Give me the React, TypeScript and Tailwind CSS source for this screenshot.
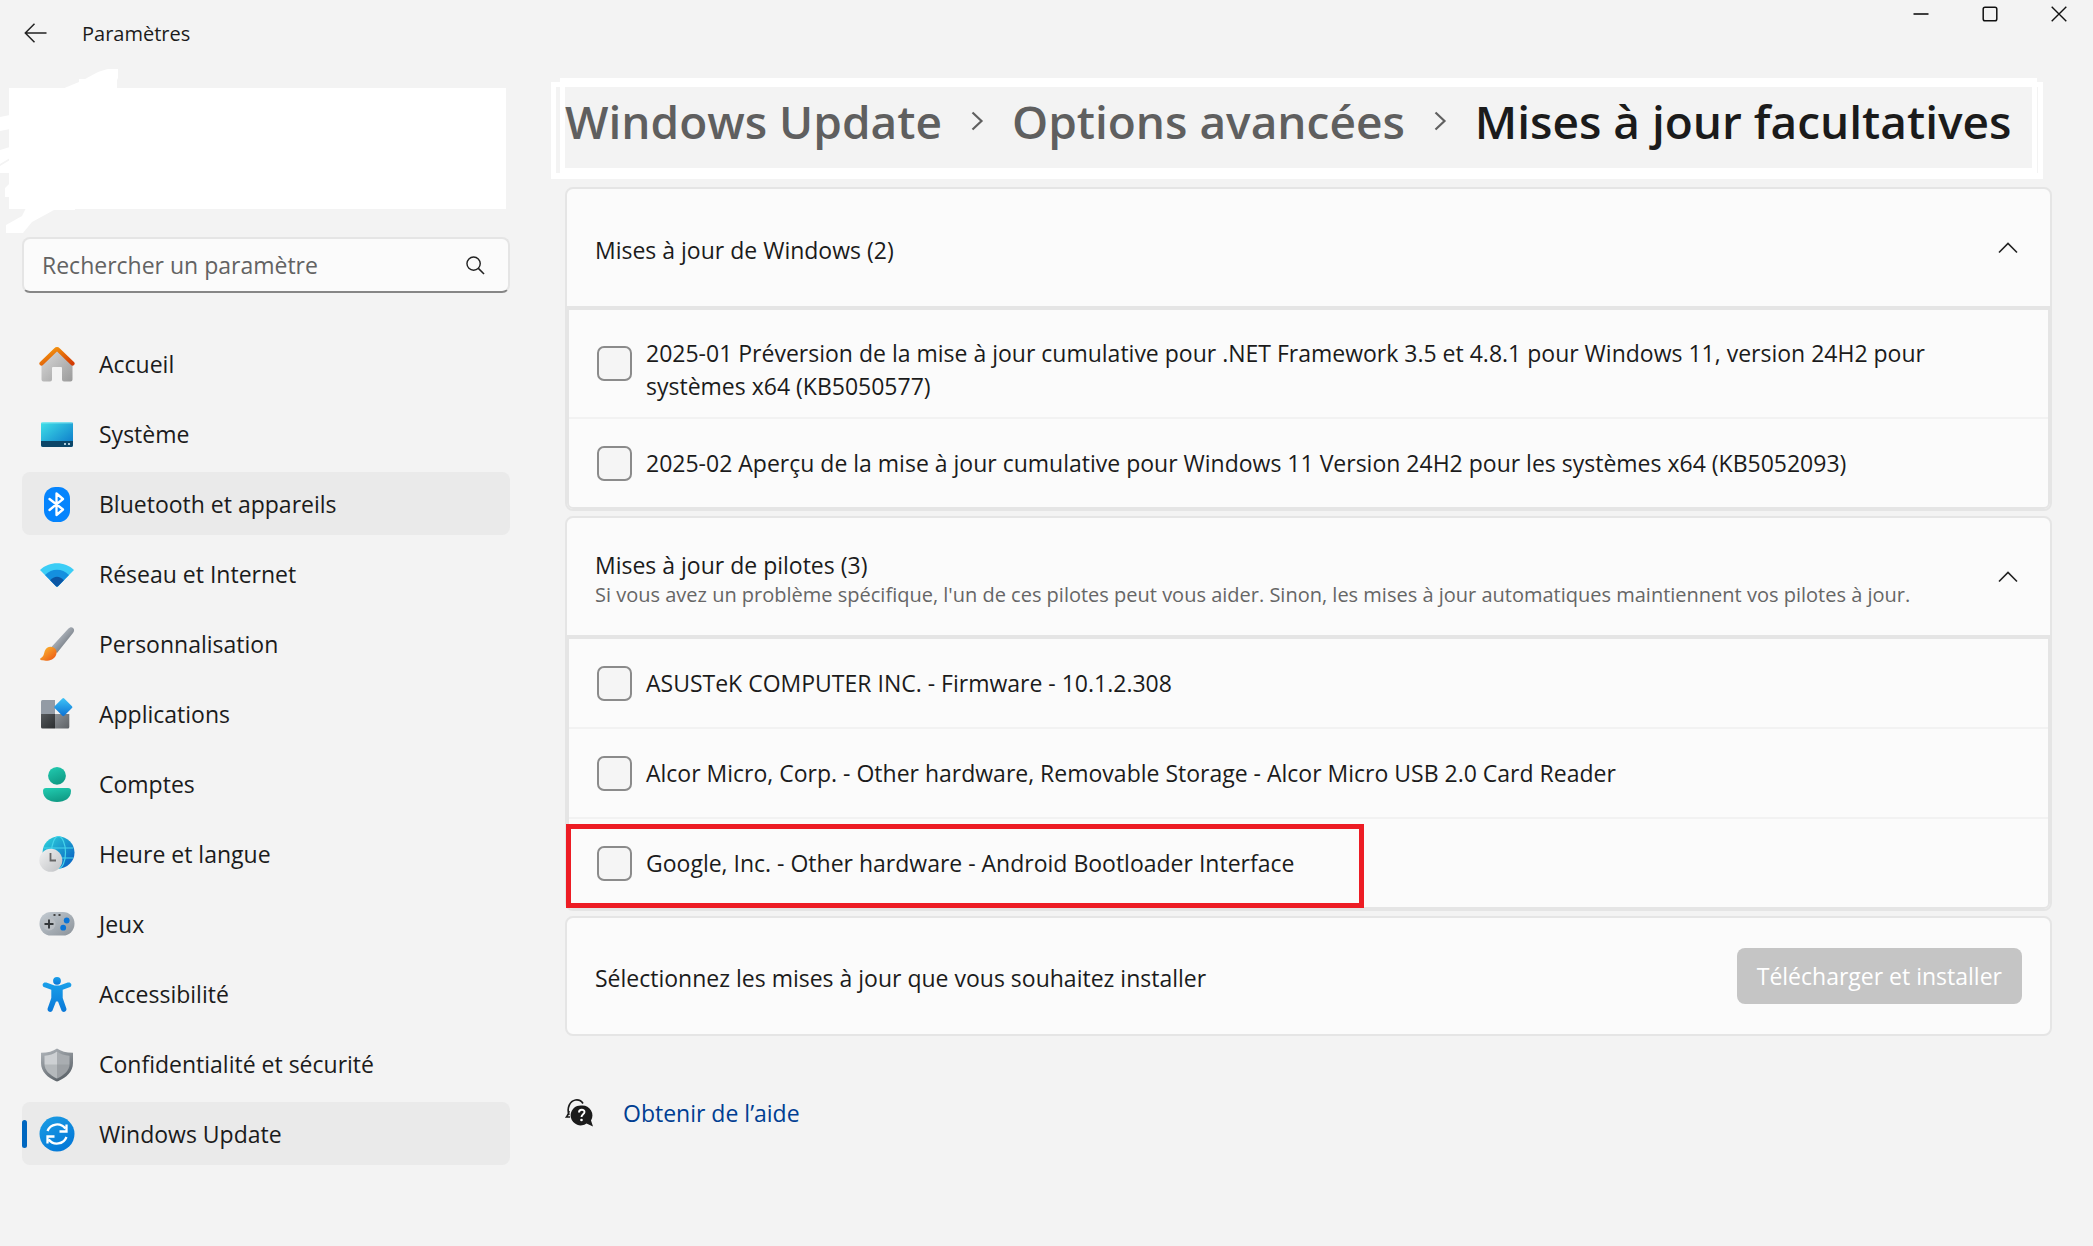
import React from "react";

const svgProps = { viewBox: "0 0 36 36", className: "h-9 w-9 shrink-0", "aria-hidden": true } as const;

const HomeIcon = () => (
  <svg {...svgProps}>
    <defs>
      <linearGradient id="homeWall" x1="0" y1="0" x2="1" y2="1"><stop stopColor="#dcdcdc" /><stop offset="1" stopColor="#9a9a9a" /></linearGradient>
      <linearGradient id="homeRoof" x1="0" y1="0" x2="1" y2="1"><stop stopColor="#f8a010" /><stop offset="1" stopColor="#d23a04" /></linearGradient>
    </defs>
    <path d="M2.5 16 18 3 33.500 16V33.500a2 2 0 0 1-2 2H25a2 2 0 0 1-2-2V22a1 1 0 0 0-1-1H14a1 1 0 0 0-1 1V33.500a2 2 0 0 1-2 2H4.500a2 2 0 0 1-2-2Z" fill="url(#homeWall)" />
    <path d="M2.500 17.500 16.500 4a2.200 2.200 0 0 1 3 0L33.500 17.500" fill="none" stroke="url(#homeRoof)" strokeWidth="4.200" strokeLinecap="round" strokeLinejoin="round" />
  </svg>
);

const SystemIcon = () => (
  <svg {...svgProps}>
    <defs><linearGradient id="sysScreen" x1="0" y1="0" x2="1" y2="1"><stop stopColor="#3fe0e8" /><stop offset="1" stopColor="#0a74c8" /></linearGradient></defs>
    <rect x="2" y="6" width="32" height="25" rx="2" fill="url(#sysScreen)" />
    <path d="M2 25h32v4a2 2 0 0 1-2 2H4a2 2 0 0 1-2-2Z" fill="#0c4668" />
    <path d="M3 6.800h30" stroke="#9deef5" strokeWidth="1" />
    <rect x="25" y="27" width="2" height="2" fill="#a9c9d8" /><rect x="29" y="27" width="2" height="2" fill="#a9c9d8" />
  </svg>
);

const BluetoothIcon = () => (
  <svg {...svgProps}>
    <rect x="5" y="1" width="26" height="35" rx="11.500" fill="#0584fd" />
    <path d="m10.500 13 13.500 10.500-6.500 5.500V7.500l6.500 5.500L10.500 24" fill="none" stroke="#fff" strokeWidth="2.300" strokeLinejoin="round" strokeLinecap="round" />
  </svg>
);

const NetworkIcon = () => (
  <svg {...svgProps}>
    <path d="M1 14C10 5 26 5 35 14L19 30.300a1.500 1.500 0 0 1-2 0Z" fill="#3bcdf6" />
    <path d="M6 19C13 12 23 12 30 19L19 30.300a1.500 1.500 0 0 1-2 0Z" fill="#1490df" />
    <path d="M11.200 24.200C15 19.500 21 19.500 24.800 24.200L19 30.300a1.500 1.500 0 0 1-2 0Z" fill="#0b56a4" />
  </svg>
);

const BrushIcon = () => (
  <svg {...svgProps}>
    <defs>
      <linearGradient id="brushStem" x1="0" y1="0" x2="1" y2="1"><stop offset=".3" stopColor="#b4bac2" /><stop offset=".75" stopColor="#70777f" /></linearGradient>
      <linearGradient id="brushTip" x1="0" y1="0" x2="1" y2="1"><stop stopColor="#fdc233" /><stop offset="1" stopColor="#ea4f12" /></linearGradient>
    </defs>
    <path d="M11.500 22 29 3C31 .8 33 .8 34.300 2.200 35.500 3.500 35.300 5.500 34 7L18 27Z" fill="url(#brushStem)" />
    <path d="M6 24.500C7.500 20 13.500 19.500 16.500 23c2.500 3.500.5 8.500-3.500 10.500-3.500 1.600-8.500 1.500-11.500.3C.5 33 1 32.500 2 32c3-1.500 2.800-4.500 4-7.500Z" fill="url(#brushTip)" />
  </svg>
);

const AppsIcon = () => (
  <svg {...svgProps}>
    <defs>
      <linearGradient id="appBlue" x1="0" y1="0" x2="1" y2="1"><stop stopColor="#3fc6f8" /><stop offset="1" stopColor="#0b6ed2" /></linearGradient>
      <linearGradient id="appDark" x1="0" y1="0" x2="1" y2="1"><stop stopColor="#55595c" /><stop offset="1" stopColor="#2b2e30" /></linearGradient>
      <linearGradient id="appGrey" x1="0" y1="0" x2="1" y2="1"><stop stopColor="#8c9196" /><stop offset="1" stopColor="#5d6165" /></linearGradient>
    </defs>
    <path d="M3.500 4H16v14H2V5.500A1.500 1.500 0 0 1 3.500 4Z" fill="#939ba5" />
    <path d="M2 18h14v14.500H3.500A1.500 1.500 0 0 1 2 31Z" fill="url(#appDark)" />
    <path d="M16 18h14.300v13a1.500 1.500 0 0 1-1.500 1.500H16Z" fill="url(#appGrey)" />
    <rect x="17.500" y="4.300" width="13.600" height="13.600" rx="1.300" fill="url(#appBlue)" transform="rotate(45 24.300 11.100)" />
  </svg>
);

const AccountIcon = () => (
  <svg {...svgProps}>
    <defs><linearGradient id="acct" x1="0" y1="0" x2=".4" y2="1"><stop stopColor="#22cdb2" /><stop offset="1" stopColor="#109c86" /></linearGradient></defs>
    <circle cx="18" cy="9.800" r="8.900" fill="url(#acct)" />
    <path d="M7 22h22a3 3 0 0 1 3 3c0 7-6 11-14 11S4 32 4 25a3 3 0 0 1 3-3Z" fill="url(#acct)" />
  </svg>
);

const TimeIcon = () => (
  <svg {...svgProps}>
    <defs>
      <linearGradient id="globe" x1="0" y1="0" x2="1" y2="1"><stop offset=".1" stopColor="#2bcbd9" /><stop offset=".8" stopColor="#0d6fc6" /></linearGradient>
      <linearGradient id="clock" x1="0" y1="0" x2="1" y2="1"><stop stopColor="#f2f2f2" /><stop offset="1" stopColor="#bfc1c4" /></linearGradient>
    </defs>
    <circle cx="19.500" cy="16.500" r="16" fill="url(#globe)" />
    <g fill="none" stroke="#46d4ea" strokeWidth="1.200"><path d="M5 12h29M5 22h29" /><ellipse cx="19.500" cy="16.500" rx="7" ry="16" /></g>
    <circle cx="11.800" cy="24.300" r="11.500" fill="url(#clock)" />
    <path d="M11.500 17v7.500H17" fill="none" stroke="#666" strokeWidth="1.800" />
  </svg>
);

const GameIcon = () => (
  <svg {...svgProps}>
    <defs><linearGradient id="pad" x1="0" y1="0" x2="1" y2="1"><stop stopColor="#c4ccd3" /><stop offset="1" stopColor="#8c939a" /></linearGradient></defs>
    <rect x=".5" y="6" width="35" height="23.500" rx="11.500" fill="url(#pad)" />
    <circle cx="10" cy="18" r="6.500" fill="#b9bec3" />
    <path d="M10 13.500v9M5.500 18h9" stroke="#33373a" strokeWidth="1.900" />
    <rect x="14.500" y="8" width="2" height="2" fill="#444" /><rect x="19.500" y="8" width="2" height="2" fill="#444" />
    <circle cx="27.700" cy="14.500" r="2.900" fill="#0a74d6" /><circle cx="24.200" cy="21.700" r="2.900" fill="#0a74d6" />
  </svg>
);

const AccessIcon = () => (
  <svg {...svgProps}>
    <defs><linearGradient id="access" x1="0" y1="0" x2="0" y2="1"><stop stopColor="#1aa0ea" /><stop offset="1" stopColor="#0a78d8" /></linearGradient></defs>
    <g fill="url(#access)"><circle cx="18" cy="4.800" r="3.900" />
      <path d="M7.300 6.600 15.500 9.500H20.500L28.700 6.600C30.300 6 31.700 6.700 32.200 8c.5 1.500-.3 2.800-1.700 3.300L23.700 13.800V22L27.300 32.300c.5 1.500-.2 3-1.500 3.500-1.500.5-2.900-.2-3.400-1.500L19 25.500h-2L13.600 34.300c-.5 1.300-1.900 2-3.400 1.500-1.300-.5-2-2-1.500-3.500L12.300 22V13.800L5.500 11.300C4.100 10.800 3.300 9.500 3.800 8c.5-1.300 1.900-2 3.500-1.400Z" />
    </g>
  </svg>
);

const ShieldIcon = () => (
  <svg {...svgProps}>
    <defs><linearGradient id="shield" x1="0" y1="0" x2=".5" y2="1"><stop stopColor="#b3b8bd" /><stop offset="1" stopColor="#5f666c" /></linearGradient></defs>
    <path d="M18 2.500c4 2.800 9 4.200 16 4.200V17c0 9-7 14.500-14.500 18-1 .5-2 .5-3 0C9 31.500 2 26 2 17V6.700c7 0 12-1.400 16-4.200Z" fill="url(#shield)" />
    <path d="M18 5.500C14.500 8 10.500 9.300 5.500 9.700V18c0 6.500 5.500 11 12.500 14.500Z" fill="#cdd0d3" />
    <path d="M18 5.500c3.500 2.500 7.500 3.800 12.500 4.200V18c0 6.500-5.500 11-12.500 14.500Z" fill="#a9adb1" />
    <path d="M5.500 18.500H18v14C11 29 5.500 25 5.500 18.500ZM18 18.500h12.500C30.500 25 25 29 18 32.500Z" fill="#7d8388" opacity=".3" />
  </svg>
);

const UpdateIcon = () => (
  <svg {...svgProps}>
    <defs><linearGradient id="upd" x1="0" y1="0" x2=".6" y2="1"><stop stopColor="#1c9ee4" /><stop offset="1" stopColor="#0479d8" /></linearGradient></defs>
    <circle cx="18" cy="18" r="17.500" fill="url(#upd)" />
    <g fill="none" stroke="#fff" strokeWidth="2.300"><path d="M8.500 15a10.300 10.300 0 0 1 17.800-2.500M27.500 8.500v7h-7M27.500 21A10.300 10.300 0 0 1 9.700 23.500M8.500 27.500v-7h7" /></g>
  </svg>
);

const NAV = [
  { label: "Accueil", Icon: HomeIcon },
  { label: "Système", Icon: SystemIcon },
  { label: "Bluetooth et appareils", Icon: BluetoothIcon, hover: true },
  { label: "Réseau et Internet", Icon: NetworkIcon },
  { label: "Personnalisation", Icon: BrushIcon },
  { label: "Applications", Icon: AppsIcon },
  { label: "Comptes", Icon: AccountIcon },
  { label: "Heure et langue", Icon: TimeIcon },
  { label: "Jeux", Icon: GameIcon },
  { label: "Accessibilité", Icon: AccessIcon },
  { label: "Confidentialité et sécurité", Icon: ShieldIcon },
  { label: "Windows Update", Icon: UpdateIcon, current: true },
];

const Chevron = () => (
  <svg viewBox="0 0 20 12" className="h-3 w-5 shrink-0" aria-hidden><path d="m1 10.500 9-9 9 9" fill="none" stroke="#222" strokeWidth="1.600" /></svg>
);

const Crumb = () => (
  <svg viewBox="0 0 14 20" className="h-5 w-3.5 shrink-0" aria-hidden><path d="m2.500 1.500 9 8.500-9 8.500" fill="none" stroke="#606060" strokeWidth="2.200" /></svg>
);

type Update = { text: string; tall?: boolean; marked?: boolean };

function Group({ title, note, items }: { title: string; note?: string; items: Update[] }) {
  return (
    <section className="rounded-lg border-2 border-[#e5e5e5] bg-[#fbfbfb]">
      <button type="button" aria-expanded className="flex h-[117px] w-full items-center justify-between pr-8 pl-7 text-left">
        <span className="pt-1">
          <span className="block leading-8">{title}</span>
          {note && <span className="block text-[20px] leading-7 text-[#666]">{note}</span>}
        </span>
        <Chevron />
      </button>
      <ul className="rounded-b-md border-2 border-t-4 border-[#e5e5e5]">
        {items.map(({ text, tall, marked }, i) => (
          <li key={text} className={i ? "relative border-t-2 border-[#f2f2f2]" : "relative"}>
            <label className={`flex items-center gap-3.5 py-3 pr-24 pl-7 ${tall ? "min-h-[107px]" : "min-h-[88px]"}`}>
              <input type="checkbox" className="h-[35px] w-[35px] shrink-0 appearance-none rounded-[7px] border-2 border-[#8b8b8b] bg-[#f5f5f5] checked:bg-[#005fb8]" />
              <span className={`leading-[33px] ${tall ? "pt-3" : ""}`}>{text}</span>
            </label>
            {marked && <span className="pointer-events-none absolute top-[5px] -bottom-px -left-[3px] w-[798px] border-5 border-[#ed1c24]" />}
          </li>
        ))}
      </ul>
    </section>
  );
}

export default function App() {
  return (
    <div className="min-h-screen bg-[#f3f3f3] font-['Open_Sans','Noto_Sans',sans-serif] text-[23px] text-[#1b1b1b]">
      <header className="flex h-[66px] items-start justify-between">
        <div className="flex h-full items-center gap-[34px] pl-6">
          <button type="button" aria-label="Retour">
            <svg viewBox="0 0 24 20" className="h-5 w-6" aria-hidden><path d="M22.500 10H1M10.500.8 1.300 10l9.200 9.200" fill="none" stroke="#222" strokeWidth="1.500" /></svg>
          </button>
          <span className="pt-0.5 text-[20px]">Paramètres</span>
        </div>
        <div className="flex">
          <button type="button" aria-label="Réduire" className="flex h-[27px] w-[69px] items-center justify-center"><svg viewBox="0 0 16 16" className="h-4 w-4"><path d="M.5 8h15" stroke="#111" strokeWidth="1.600" /></svg></button>
          <button type="button" aria-label="Agrandir" className="flex h-[27px] w-[69px] items-center justify-center"><svg viewBox="0 0 16 16" className="h-4 w-4"><rect x="1.200" y="1.200" width="13.600" height="13.600" rx="1.800" fill="none" stroke="#111" strokeWidth="1.500" /></svg></button>
          <button type="button" aria-label="Fermer" className="flex h-[27px] w-[69px] items-center justify-center"><svg viewBox="0 0 16 16" className="h-4 w-4"><path d="m.7.7 14.600 14.600M15.300.7.7 15.300" stroke="#111" strokeWidth="1.400" /></svg></button>
        </div>
      </header>

      <div className="flex">
        <aside className="w-[510px] shrink-0">
          <div className="relative pt-[22px] pr-1 pl-[9px]">
            <div className="h-[121px] bg-white" />
            <svg viewBox="0 0 120 180" className="absolute -top-1.5 left-0 h-[180px] w-[120px]" fill="#fff" aria-hidden>
              <path d="M62 29 79 22V19H85L98 12 106 9.500 108 9H118V18L117 20V29Z" />
              <path d="M0 57 10 55V69L0 71ZM0 90 10 87V98L0 104ZM0 106 10 100V113H0ZM5 128 10 123V137H5Z" />
              <path d="M26 148H75V150H54L32 162 23 173H6V165L22 156Z" />
            </svg>
          </div>
          <label className="mt-7 ml-[22px] flex h-[56px] items-center justify-between rounded-lg border-2 border-[#e5e5e5] border-b-[#868686] bg-[#fbfbfb] pr-[23px] pl-[18px]">
            <input type="text" aria-label="Rechercher un paramètre" placeholder="Rechercher un paramètre" className="min-w-0 flex-1 bg-transparent outline-none placeholder:text-[#636363]" />
            <svg viewBox="0 0 20 20" className="h-[19px] w-[19px]" aria-hidden><circle cx="8" cy="8" r="7" fill="none" stroke="#222" strokeWidth="1.500" /><path d="m13 13 6 6" stroke="#222" strokeWidth="1.600" /></svg>
          </label>
          <nav className="mt-[39px] ml-[22px] flex flex-col gap-[7px]">
            {NAV.map(({ label, Icon, hover, current }) => (
              <a key={label} href="#" aria-current={current ? "page" : undefined} className={`relative flex h-[63px] items-center gap-6 rounded-lg pl-[17px] ${hover || current ? "bg-[#eaeaea]" : ""}`}>
                {current && <span className="absolute left-0 h-7 w-[5px] rounded-full bg-[#0067c0]" />}
                <Icon />
                <span className="pt-0.5">{label}</span>
              </a>
            ))}
          </nav>
        </aside>

        <main className="flex min-w-0 flex-1 flex-col pr-[41px] pl-[55px]">
          <div className="relative mt-3 h-[101px]">
            <div className="absolute top-0 right-[15px] bottom-1.5 -left-[5px] border-5 border-t-9 border-white" />
            <div className="absolute top-1 right-[9px] bottom-0 -left-3.5 border-5 border-b-6 border-white" />
            <h1 className="relative flex items-center gap-7 pt-3 text-[46px] leading-[62px] font-semibold whitespace-nowrap">
              <a href="#" className="text-[#5f5f5f]">Windows Update</a>
              <Crumb />
              <a href="#" className="text-[#5f5f5f]">Options avancées</a>
              <Crumb />
              <span>Mises à jour facultatives</span>
            </h1>
          </div>
          <div className="mt-2 flex flex-col gap-[5px]">
            <Group
              title="Mises à jour de Windows (2)"
              items={[
                { text: "2025-01 Préversion de la mise à jour cumulative pour .NET Framework 3.5 et 4.8.1 pour Windows 11, version 24H2 pour systèmes x64 (KB5050577)", tall: true },
                { text: "2025-02 Aperçu de la mise à jour cumulative pour Windows 11 Version 24H2 pour les systèmes x64 (KB5052093)" },
              ]}
            />
            <Group
              title="Mises à jour de pilotes (3)"
              note="Si vous avez un problème spécifique, l'un de ces pilotes peut vous aider. Sinon, les mises à jour automatiques maintiennent vos pilotes à jour."
              items={[
                { text: "ASUSTeK COMPUTER INC. - Firmware - 10.1.2.308" },
                { text: "Alcor Micro, Corp. - Other hardware, Removable Storage - Alcor Micro USB 2.0 Card Reader" },
                { text: "Google, Inc. - Other hardware - Android Bootloader Interface", marked: true },
              ]}
            />
            <section className="flex h-[120px] items-center justify-between rounded-lg border-2 border-[#e5e5e5] bg-[#fbfbfb] px-7">
              <span className="pt-1">Sélectionnez les mises à jour que vous souhaitez installer</span>
              <button type="button" disabled className="h-[56px] rounded-lg bg-[#c5c5c5] px-5 text-white">Télécharger et installer</button>
            </section>
          </div>
          <div className="mt-[58px] flex items-center gap-[29px]">
            <svg viewBox="0 0 29 29" className="h-[29px] w-[29px]" aria-hidden>
              <path d="M4 17C1.500 9.500 5 3 10.500 2c3.500-.5 6 1 7.500 3.500M4 13c0 3-1 4-2.500 6H5" fill="none" stroke="#1b1b1b" strokeWidth="1.700" />
              <path d="M17 7.500a10 10 0 1 0 4.500 18L28 28.500 26 22.500A10 10 0 0 0 17 7.500Z" fill="#1b1b1b" />
              <path d="M14 14.500c0-3.500 5.500-3.500 5.500-.5 0 2.300-3 2.300-3 5" fill="none" stroke="#fff" strokeWidth="1.900" /><circle cx="16.500" cy="22" r="1.300" fill="#fff" />
            </svg>
            <a href="#" className="pt-0.5 text-[#003e92]">Obtenir de l’aide</a>
          </div>
        </main>
      </div>
    </div>
  );
}
